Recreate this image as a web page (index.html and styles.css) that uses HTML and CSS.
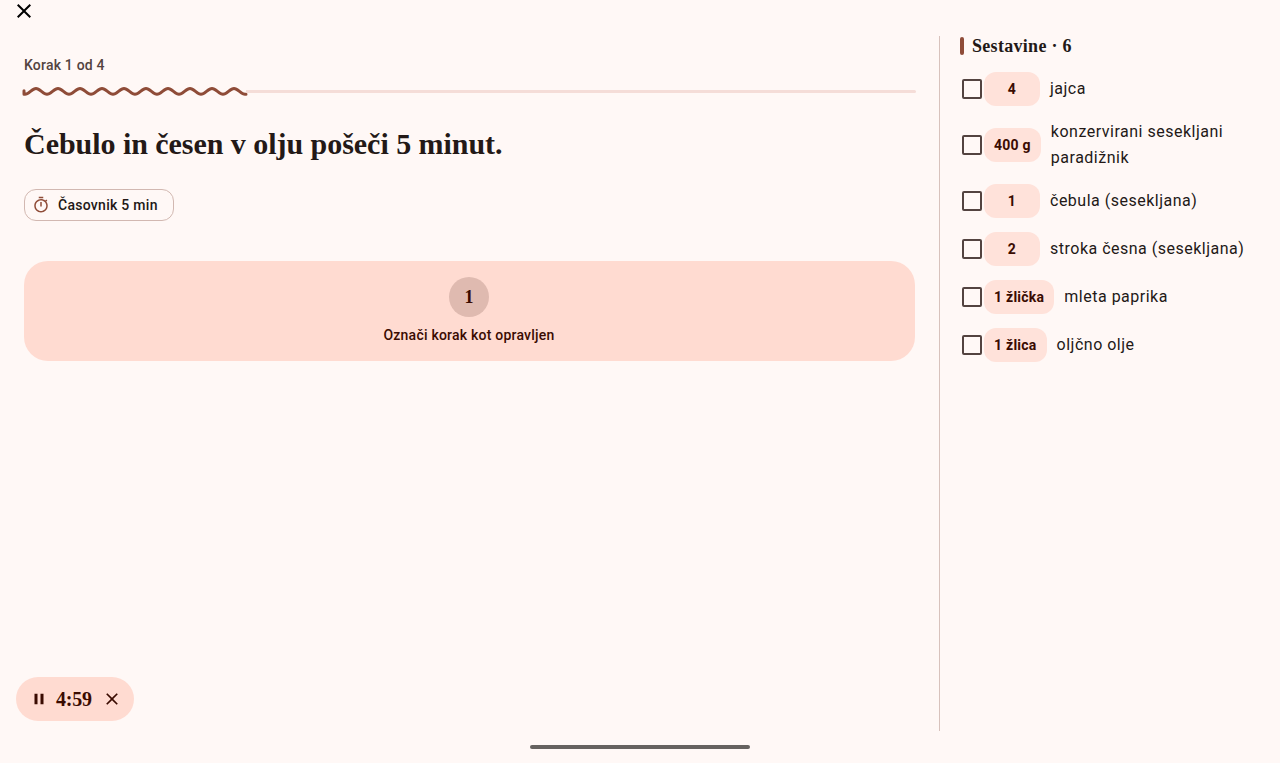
FILE: index.html
```
<!DOCTYPE html>
<html lang="sl">
<head>
  <meta charset="UTF-8" />
  <meta name="viewport" content="width=device-width, initial-scale=1.0"/>
  <title>Kuhanje - korak 1 od 4</title>
  <link rel="stylesheet" href="styles.css">
</head>
<body>
  <header class="topbar">
    <button class="icon-btn close" aria-label="Zapri">
      <svg width="24" height="24" viewBox="0 0 24 24"><path d="M19 6.41L17.59 5 12 10.59 6.41 5 5 6.41 10.59 12 5 17.59 6.41 19 12 13.41 17.59 19 19 17.59 13.41 12z"/></svg>
    </button>
  </header>

  <div class="content">
    <main class="step">
      <p class="step-count">Korak 1 od 4</p>
      <div class="progress">
        <svg class="wave" width="226" height="12" viewBox="0 0 226 12">
          <path d="M2 5.8V9.2H3c4 0 7-5.8 11-5.8s7 5.8 11 5.8s7-5.8 11-5.8s7 5.8 11 5.8s7-5.8 11-5.8s7 5.8 11 5.8s7-5.8 11-5.8s7 5.8 11 5.8s7-5.8 11-5.8s7 5.8 11 5.8s7-5.8 11-5.8s7 5.8 11 5.8s7-5.8 11-5.8s7 5.8 11 5.8s7-5.8 11-5.8s7 5.8 11 5.8s7-5.8 11-5.8s7 5.8 11 5.8s7-5.8 11-5.8s7 5.8 11 5.8h1"/>
        </svg>
        <div class="track"></div>
      </div>

      <h1>Čebulo in česen v olju pošeči 5 minut.</h1>

      <button class="chip">
        <svg width="18" height="18" viewBox="0 0 24 24"><path d="M15 1H9v2h6V1zm-4 13h2V8h-2v6zm8.03-6.61l1.42-1.42c-.43-.51-.9-.99-1.41-1.41l-1.42 1.42C16.07 4.74 14.12 4 12 4c-4.97 0-9 4.03-9 9s4.02 9 9 9 9-4.03 9-9c0-2.12-.74-4.07-1.97-5.61zM12 20c-3.87 0-7-3.13-7-7s3.13-7 7-7 7 3.13 7 7-3.13 7-7 7z"/></svg>
        <span>Časovnik 5 min</span>
      </button>

      <button class="done-card">
        <span class="number">1</span>
        <span class="done-label">Označi korak kot opravljen</span>
      </button>

      <div class="timer">
        <svg class="pause" width="18" height="18" viewBox="0 0 24 24"><path d="M6 19h4V5H6v14zm8-14v14h4V5h-4z"/></svg>
        <span class="time">4:59</span>
        <svg class="cancel" width="20" height="20" viewBox="0 0 24 24"><path d="M19 6.41L17.59 5 12 10.59 6.41 5 5 6.41 10.59 12 5 17.59 6.41 19 12 13.41 17.59 19 19 17.59 13.41 12z"/></svg>
      </div>
    </main>

    <aside class="ingredients">
      <h2>Sestavine · 6</h2>
      <ul>
        <li><span class="box"></span><span class="amount">4</span><span class="name">jajca</span></li>
        <li><span class="box"></span><span class="amount">400 g</span><span class="name">konzervirani sesekljani paradižnik</span></li>
        <li><span class="box"></span><span class="amount">1</span><span class="name">čebula (sesekljana)</span></li>
        <li><span class="box"></span><span class="amount">2</span><span class="name">stroka česna (sesekljana)</span></li>
        <li><span class="box"></span><span class="amount">1 žlička</span><span class="name">mleta paprika</span></li>
        <li><span class="box"></span><span class="amount">1 žlica</span><span class="name">oljčno olje</span></li>
      </ul>
    </aside>
  </div>

  <footer class="nav-area"><div class="nav-handle"></div></footer>
</body>
</html>
```
FILE: styles.css
```
* {
  box-sizing: border-box;
}
body {
  margin: 0;
  height: 763px;
  display: flex;
  flex-direction: column;
  overflow: hidden;
  background: #fff8f6;
  color: #231917;
  font-family: Roboto, sans-serif;
}
h1, h2, p, ul {
  margin: 0;
  padding: 0;
}
button {
  font: inherit;
  color: inherit;
  background: none;
  border: 0;
  padding: 0;
}
svg {
  display: block;
  flex: none;
}

.topbar {
  height: 36px;
  padding-left: 12px;
}
.icon-btn {
  display: block;
  height: 24px;
}
.close {
  margin-top: -1px;
}

.content {
  display: flex;
  height: 695px;
}
.step {
  display: flex;
  flex-direction: column;
  align-items: flex-start;
  width: 939px;
  padding: 19px 24px 10px;
}
.step-count {
  font-size: 14px;
  font-weight: 500;
  line-height: 20px;
  letter-spacing: 0.2px;
  color: #534340;
}
.progress {
  display: flex;
  align-items: center;
  width: 894px;
  margin: 10px 0 0 -2px;
}
.wave path {
  fill: none;
  stroke: #8f4c38;
  stroke-width: 3;
  stroke-linecap: round;
  stroke-linejoin: round;
}
.track {
  flex: 1;
  height: 3px;
  margin-left: -2px;
  border-radius: 0 2px 2px 0;
  background: #f5ddd8;
}
h1 {
  margin-top: 27px;
  font-family: "Liberation Serif", serif;
  font-size: 30px;
  font-weight: 700;
  line-height: 40px;
  letter-spacing: -0.04px;
  white-space: nowrap;
}
.chip {
  display: flex;
  align-items: center;
  gap: 8px;
  width: 150px;
  height: 32px;
  margin-top: 25px;
  padding-left: 7px;
  border: 1px solid #d2b8b1;
  border-radius: 12px;
  font-size: 14px;
  font-weight: 500;
  letter-spacing: 0.28px;
  white-space: nowrap;
}
.chip svg {
  fill: #8f4c38;
}
.done-card {
  display: flex;
  flex-direction: column;
  align-items: center;
  width: 891px;
  height: 100px;
  margin-top: 40px;
  padding: 16px 1px 0 0;
  border-radius: 24px;
  background: #ffdbd1;
  color: #3a0b01;
}
.number {
  width: 40px;
  height: 40px;
  border-radius: 50%;
  background: #dfbab0;
  font-family: "Liberation Serif", serif;
  font-size: 18px;
  font-weight: 700;
  line-height: 40px;
  text-align: center;
}
.done-label {
  margin-top: 8px;
  font-size: 14px;
  font-weight: 500;
  line-height: 20px;
  letter-spacing: 0.22px;
}
.timer {
  display: flex;
  align-items: center;
  width: 118px;
  height: 44px;
  margin: auto 0 0 -8px;
  padding-left: 14px;
  border-radius: 22px;
  background: #ffdbd1;
  color: #3a0b01;
}
.timer svg {
  fill: #3a0b01;
}
.time {
  width: 36px;
  margin: 0 10px 0 8px;
  font-family: "Liberation Serif", serif;
  font-size: 20px;
  font-weight: 700;
  letter-spacing: -0.2px;
}

.ingredients {
  flex: 1;
  padding-left: 20px;
  border-left: 1px solid #d8c2bc;
}
h2 {
  display: flex;
  align-items: center;
  height: 20px;
  font-family: "Liberation Serif", serif;
  font-size: 18px;
  font-weight: 700;
  letter-spacing: 0.3px;
  white-space: nowrap;
}
h2::before {
  content: "";
  width: 4px;
  height: 18px;
  margin-right: 8px;
  border-radius: 2px;
  background: #8f4c38;
}
ul {
  list-style: none;
  margin-top: 9px;
}
li {
  display: flex;
  align-items: center;
  min-height: 48px;
  padding: 6px 20px 6px 2px;
}
.box {
  flex: none;
  width: 20px;
  height: 20px;
  margin-right: 2px;
  border: 2px solid #534340;
  border-radius: 2px;
}
.amount {
  flex: none;
  min-width: 56px;
  height: 34px;
  margin-right: 10px;
  padding: 0 10px;
  border-radius: 12px;
  background: #ffe2da;
  color: #3a0b01;
  font-size: 14px;
  font-weight: 700;
  line-height: 35px;
  letter-spacing: 0.25px;
  text-align: center;
}
.name {
  font-size: 16px;
  line-height: 26px;
  letter-spacing: 0.5px;
}

.nav-area {
  display: flex;
  justify-content: center;
  padding-top: 14px;
}
.nav-handle {
  width: 220px;
  height: 4px;
  border-radius: 2px;
  background: #666260;
}
```
